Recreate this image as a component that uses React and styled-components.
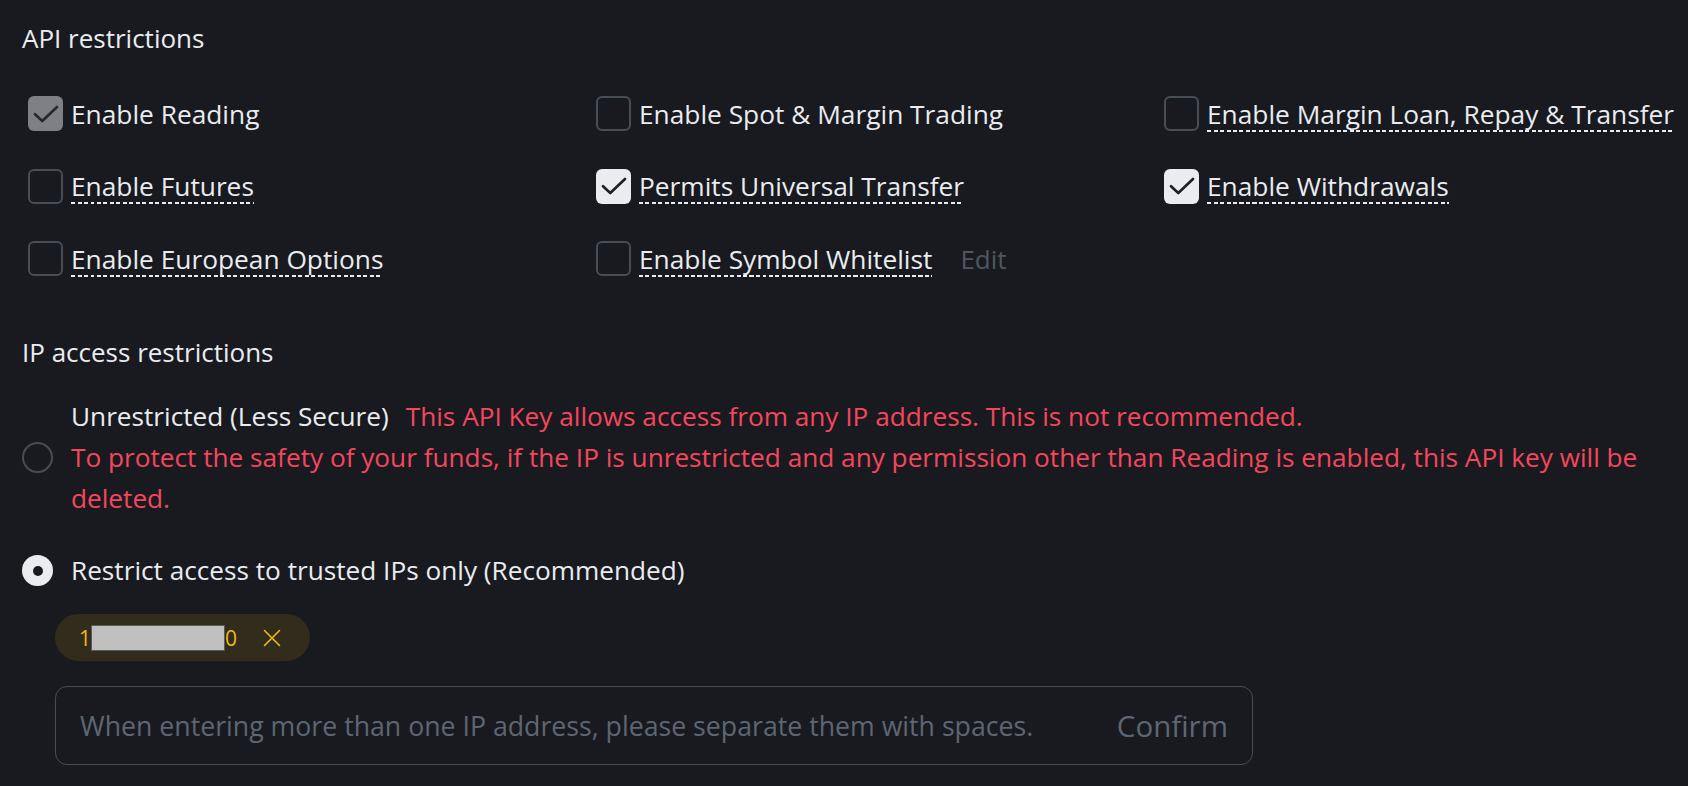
import React from "react";
import styled, { createGlobalStyle } from "styled-components";

const Global = createGlobalStyle`
  html, body { margin: 0; padding: 0; background: #181a20; }
  body { font-family: "Open Sans", "Noto Sans", sans-serif; color: #eaecef; }
`;

const Page = styled.div`
  background: #181a20;
  min-height: 786px;
  box-sizing: border-box;
  padding: 20px 22px 0 22px;
  font-size: 26px;
`;

const Heading = styled.div`
  font-size: 26px;
  line-height: 36px;
  color: #eaecef;
  margin-top: ${(p) => p.$mt || 0}px;
`;

const PermGrid = styled.div`
  display: grid;
  grid-template-columns: repeat(3, 568px);
  row-gap: 36.5px;
  margin-top: 39.5px;
  margin-left: 6px;
`;

const Perm = styled.div`
  display: flex;
  align-items: center;
  height: 36px;
  white-space: nowrap;
`;

const Box = styled.span`
  width: 35px;
  height: 35px;
  box-sizing: border-box;
  border-radius: 6px;
  flex: none;
  display: flex;
  align-items: center;
  justify-content: center;
  border: ${(p) => (p.$state === "off" ? "2px solid #474d57" : "none")};
  background: ${(p) =>
    p.$state === "on" ? "#eaecef" : p.$state === "locked" ? "#7e8085" : "transparent"};
  margin-right: 8px;
`;

const Label = styled.span`
  display: inline-block;
  line-height: 36px;
  font-size: 26.3px;
  color: #eaecef;
  background-image: ${(p) =>
    p.$tip
      ? "repeating-linear-gradient(to right, #eaecef 0 4px, transparent 4px 6.5px)"
      : "none"};
  background-repeat: no-repeat;
  background-position: left bottom;
  background-size: 100% 2px;
`;

const Edit = styled.span`
  color: #4f5662;
  margin-left: 28px;
  line-height: 36px;
`;

const RadioRow = styled.div`
  display: flex;
  align-items: center;
  margin-top: ${(p) => p.$mt || 0}px;
`;

const Radio = styled.span`
  width: 31px;
  height: 31px;
  border-radius: 50%;
  box-sizing: border-box;
  flex: none;
  margin-right: 18px;
  display: flex;
  align-items: center;
  justify-content: center;
  border: ${(p) => (p.$on ? "none" : "2px solid #474d57")};
  background: ${(p) => (p.$on ? "#eaecef" : "transparent")};
  &::after {
    content: "";
    display: ${(p) => (p.$on ? "block" : "none")};
    width: 10px;
    height: 10px;
    border-radius: 50%;
    background: #181a20;
  }
`;

const RadioText = styled.div`
  line-height: 41px;
  font-size: 26.2px;
  color: #eaecef;
  flex: 1;
  max-width: 1590px;
`;

const Warn = styled.span`
  color: #f6465d;
  margin-left: ${(p) => p.$ml || 0}px;
`;

const WarnBlock = styled.div`
  color: #f6465d;
`;

const IPArea = styled.div`
  margin-left: 33px;
  margin-top: 23px;
  display: flex;
  flex-direction: column;
  align-items: flex-start;
`;

const Chip = styled.div`
  height: 47px;
  box-sizing: border-box;
  border-radius: 24px;
  background: rgba(240, 185, 11, 0.12);
  display: flex;
  align-items: center;
  padding: 0 29px 0 24px;
  color: #f0b90b;
  font-size: 21px;
`;

const Masked = styled.span`
  display: inline-block;
  width: 134px;
  height: 26px;
  box-sizing: border-box;
  background: #c0c0c0;
  border: 1px solid #5a5a5a;
`;

const RemoveBtn = styled.span`
  display: flex;
  margin-left: 26px;
`;

const InputWrap = styled.div`
  margin-top: 25px;
  width: 1198px;
  height: 79px;
  box-sizing: border-box;
  border: 1.5px solid #474d57;
  border-radius: 12px;
  display: flex;
  align-items: center;
  padding: 0 24px 0 24px;
`;

const Input = styled.input`
  flex: 1;
  background: transparent;
  border: none;
  outline: none;
  font-family: "Open Sans", "Noto Sans", sans-serif;
  font-size: 26.7px;
  color: #eaecef;
  padding: 0;
  &::placeholder {
    color: #5e6673;
  }
`;

const Confirm = styled.span`
  color: #5e6673;
  font-size: 29.5px;
  font-weight: 500;
`;

const Check = ({ color }) => (
  <svg width="30" height="30" viewBox="0 0 24 24" fill="none">
    <path d="M3.2 12.2 L9 17.6 L20.8 6.4" stroke={color} strokeWidth="2.1" strokeLinecap="round" strokeLinejoin="round" />
  </svg>
);

const perms = [
  { label: "Enable Reading", state: "locked", tip: false },
  { label: "Enable Spot & Margin Trading", state: "off", tip: false },
  { label: "Enable Margin Loan, Repay & Transfer", state: "off", tip: true },
  { label: "Enable Futures", state: "off", tip: true },
  { label: "Permits Universal Transfer", state: "on", tip: true },
  { label: "Enable Withdrawals", state: "on", tip: true },
  { label: "Enable European Options", state: "off", tip: true },
  { label: "Enable Symbol Whitelist", state: "off", tip: true, edit: true },
];

export default function App() {
  return (
    <>
      <Global />
      <Page>
        <Heading>API restrictions</Heading>
        <PermGrid>
          {perms.map((p) => (
            <Perm key={p.label}>
              <Box $state={p.state}>
                {p.state !== "off" && <Check color={p.state === "on" ? "#1e2026" : "#26282d"} />}
              </Box>
              <Label $tip={p.tip}>{p.label}</Label>
              {p.edit && <Edit>Edit</Edit>}
            </Perm>
          ))}
        </PermGrid>

        <Heading $mt={57.5}>IP access restrictions</Heading>

        <RadioRow $mt={26}>
          <Radio />
          <RadioText>
            <div>
              Unrestricted (Less Secure)
              <Warn $ml={17}>This API Key allows access from any IP address. This is not recommended.</Warn>
            </div>
            <WarnBlock>
              To protect the safety of your funds, if the IP is unrestricted and any permission other than Reading is enabled, this API key will be deleted.
            </WarnBlock>
          </RadioText>
        </RadioRow>

        <RadioRow $mt={31}>
          <Radio $on />
          <RadioText>Restrict access to trusted IPs only (Recommended)</RadioText>
        </RadioRow>

        <IPArea>
          <Chip>
            <span>1</span>
            <Masked />
            <span>0</span>
            <RemoveBtn>
              <svg width="18" height="18" viewBox="0 0 18 18" fill="none">
                <path d="M1.5 1.5 L16.5 16.5 M16.5 1.5 L1.5 16.5" stroke="#f0b90b" strokeWidth="1.6" strokeLinecap="round" />
              </svg>
            </RemoveBtn>
          </Chip>
          <InputWrap>
            <Input placeholder="When entering more than one IP address, please separate them with spaces." />
            <Confirm>Confirm</Confirm>
          </InputWrap>
        </IPArea>
      </Page>
    </>
  );
}
